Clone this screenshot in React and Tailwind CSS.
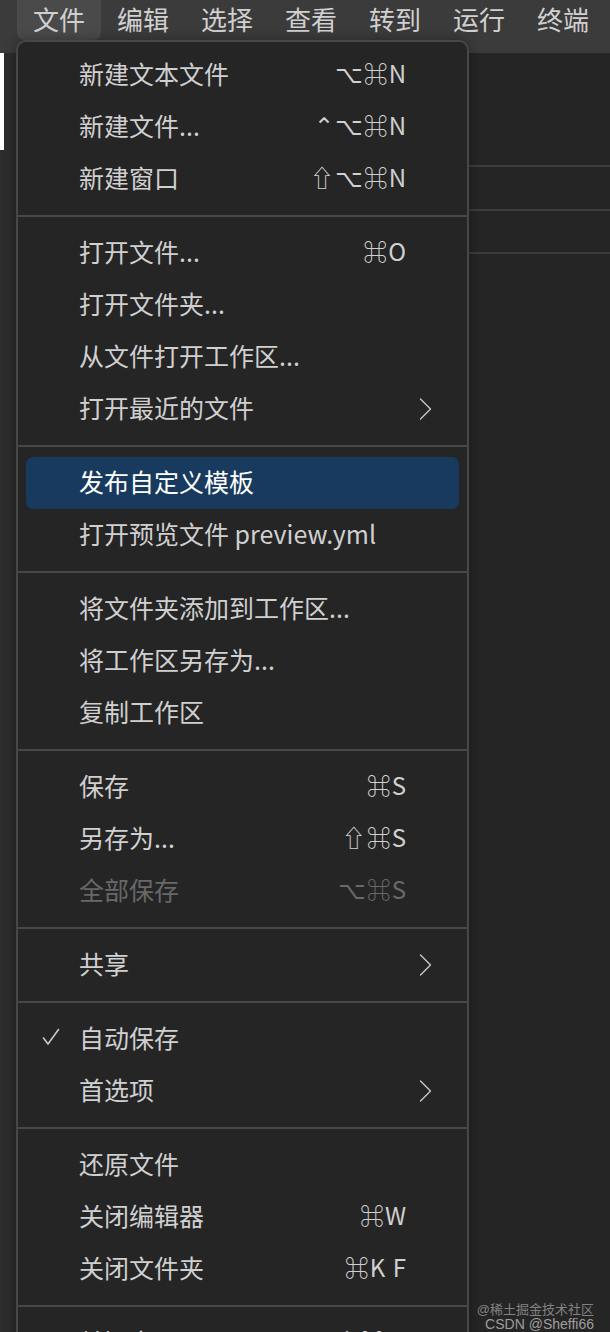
import React from 'react'

const FONT = { fontFamily: '"Noto Sans CJK SC", "DejaVu Sans", sans-serif' }

const MENUBAR = ['文件', '编辑', '选择', '查看', '转到', '运行', '终端']

const SECTIONS = [
  [
    { label: '新建文本文件', keys: '⌥⌘N' },
    { label: '新建文件...', keys: '⌃⌥⌘N' },
    { label: '新建窗口', keys: '⇧⌥⌘N' },
  ],
  [
    { label: '打开文件...', keys: '⌘O' },
    { label: '打开文件夹...' },
    { label: '从文件打开工作区...' },
    { label: '打开最近的文件', sub: true },
  ],
  [
    { label: '发布自定义模板', active: true },
    { label: '打开预览文件 preview.yml' },
  ],
  [
    { label: '将文件夹添加到工作区...' },
    { label: '将工作区另存为...' },
    { label: '复制工作区' },
  ],
  [
    { label: '保存', keys: '⌘S' },
    { label: '另存为...', keys: '⇧⌘S' },
    { label: '全部保存', keys: '⌥⌘S', disabled: true },
  ],
  [{ label: '共享', sub: true }],
  [
    { label: '自动保存', checked: true },
    { label: '首选项', sub: true },
  ],
  [
    { label: '还原文件' },
    { label: '关闭编辑器', keys: '⌘W' },
    { label: '关闭文件夹', keys: '⌘K F' },
  ],
  [{ label: '关闭窗口', keys: '⇧⌘W' }],
]

const Chevron = () => (
  <svg width="13" height="24" viewBox="0 0 13 24" fill="none" stroke="currentColor" strokeWidth="1.4" strokeLinecap="round" strokeLinejoin="round">
    <path d="M1.5 2l10 10-10 10" />
  </svg>
)

const Check = () => (
  <svg width="18" height="18" viewBox="0 0 18 18" fill="none" stroke="currentColor" strokeWidth="1.6" strokeLinecap="round" strokeLinejoin="round">
    <path d="M1.5 10l4.5 6L16.5 1.5" />
  </svg>
)

const MenuRow = ({ item }) => {
  const color = item.active ? 'bg-[#173a5e] text-white' : item.disabled ? 'text-[#686868]' : 'text-[#d0d0d0]'
  return (
    <div className={`mx-[8px] h-[52px] flex items-center pl-[16px] pb-[4px] rounded-[7px] ${item.sub ? 'pr-[27px]' : 'pr-[52px]'} ${color}`}>
      <div className="w-[37px] flex items-center text-[#c8c8c8]">{item.checked && <Check />}</div>
      <div className="flex-1 text-[25px] leading-none whitespace-nowrap">{item.label}</div>
      {item.keys && <div className="text-[24px] leading-none tracking-[1px] whitespace-nowrap">{item.keys}</div>}
      {item.sub && <div className="text-[#c8c8c8] pt-[3px]"><Chevron /></div>}
    </div>
  )
}

export default function App() {
  return (
    <div className="relative w-[610px] h-[1332px] overflow-hidden bg-[#252525]" style={FONT}>
      {/* menubar */}
      <div className="h-[53px] bg-[#3b3b3b] flex items-start pl-[17px]">
        {MENUBAR.map((m, i) => (
          <div
            key={m}
            className={`h-[40px] px-[16px] pb-[2px] flex items-center text-[26px] leading-none text-[#d0d0d0] ${i === 0 ? 'bg-[#4a4a4a] rounded-b-[8px]' : ''}`}
          >
            {m}
          </div>
        ))}
      </div>

      {/* window body behind the menu */}
      <div className="flex h-[1279px]">
        <div className="w-[16px] bg-[#2c2c2c]">
          <div className="w-[4px] h-[97px] bg-white" />
        </div>
        <div className="flex-1 flex flex-col">
          <div className="h-[114px] border-b-2 border-[#3c3c3c]" />
          <div className="h-[44px] border-b-2 border-[#3c3c3c]" />
          <div className="h-[43px] border-b-2 border-[#3c3c3c]" />
        </div>
      </div>

      {/* file menu dropdown */}
      <div className="absolute left-[16px] top-[40px] w-[453px] bg-[#252526] border-2 border-b-0 border-[#474747] rounded-t-[10px] shadow-[0_0_12px_rgba(0,0,0,0.35)]">
        {SECTIONS.map((sec, si) => (
          <div key={si} className={`${si === 0 ? 'pt-[7px]' : 'pt-[10px] border-t-2 border-[#474747]'} pb-[10px]`}>
            {sec.map((item) => (
              <MenuRow key={item.label} item={item} />
            ))}
          </div>
        ))}
      </div>

      {/* watermark */}
      <div className="absolute right-[16px] bottom-0 flex flex-col items-end leading-[15px] text-[#9a9a9a] opacity-80" style={{ fontFamily: '"Liberation Sans", "Noto Sans CJK SC", sans-serif' }}>
        <div className="text-[13px]">@稀土掘金技术社区</div>
        <div className="text-[14px] text-[#bdbdbd]">CSDN @Sheffi66</div>
      </div>
    </div>
  )
}
